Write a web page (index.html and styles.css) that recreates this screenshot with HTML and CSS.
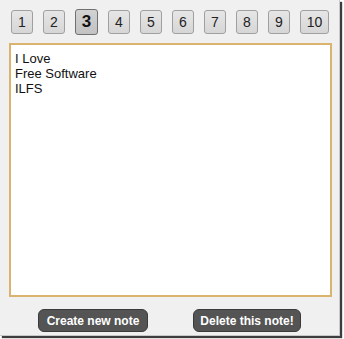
FILE: index.html
```html
<!DOCTYPE html>
<html>
<head>
<meta charset="utf-8">
<link rel="stylesheet" href="styles.css">
</head>
<body>
<div class="window">
  <div class="tabs">
    <span class="tab">1</span>
    <span class="tab">2</span>
    <span class="tab active">3</span>
    <span class="tab">4</span>
    <span class="tab">5</span>
    <span class="tab">6</span>
    <span class="tab">7</span>
    <span class="tab">8</span>
    <span class="tab">9</span>
    <span class="tab wide">10</span>
  </div>
  <div class="note">I Love<br>Free Software<br>ILFS</div>
  <div class="actions">
    <span class="btn create">Create new note</span>
    <span class="btn delete">Delete this note!</span>
  </div>
</div>
</body>
</html>
```
FILE: styles.css
```css
html, body {
  margin: 0;
  padding: 0;
  background: #ffffff;
}
body {
  width: 344px;
  height: 339px;
  overflow: hidden;
  font-family: "Liberation Sans", Arial, sans-serif;
}
.window {
  box-sizing: border-box;
  width: 340px;
  height: 336px;
  background: #f0f0f0;
  border-right: 1px solid #c8c8c8;
  border-bottom: 1px solid #c8c8c8;
  box-shadow: 2px 2px 1px #3c3c3c;
  padding: 9px 0 0 9px;
}
.tabs {
  display: flex;
  align-items: center;
  gap: 10px;
  padding-left: 2px;
  height: 26px;
}
.tab {
  box-sizing: border-box;
  width: 22px;
  height: 24px;
  display: flex;
  align-items: center;
  justify-content: center;
  font-size: 14px;
  color: #222;
  background: linear-gradient(#e6e6e6, #d6d6d6);
  border: 1px solid #a0a0a0;
  border-radius: 3px;
}
.tab.active {
  width: 23px;
  height: 26px;
  font-weight: bold;
  font-size: 17px;
  color: #111;
  background: linear-gradient(#d2d2d2, #c2c2c2);
  border-color: #707070;
}
.tab.wide {
  width: 29px;
}
.note {
  box-sizing: border-box;
  margin-top: 8px;
  width: 323px;
  height: 254px;
  background: #ffffff;
  border: 2px solid #dab36f;
  padding: 6px 4px;
  font-size: 13px;
  line-height: 15px;
  color: #111;
}
.actions {
  display: flex;
  justify-content: center;
  gap: 45px;
  margin-top: 12px;
  padding-right: 9px;
}
.btn {
  box-sizing: border-box;
  height: 23px;
  display: flex;
  align-items: center;
  justify-content: center;
  background: #545454;
  color: #ffffff;
  font-weight: bold;
  font-size: 12px;
  border: 1px solid #3a3a3a;
  border-radius: 6px;
}
.create { width: 110px; }
.delete { width: 108px; }
```
